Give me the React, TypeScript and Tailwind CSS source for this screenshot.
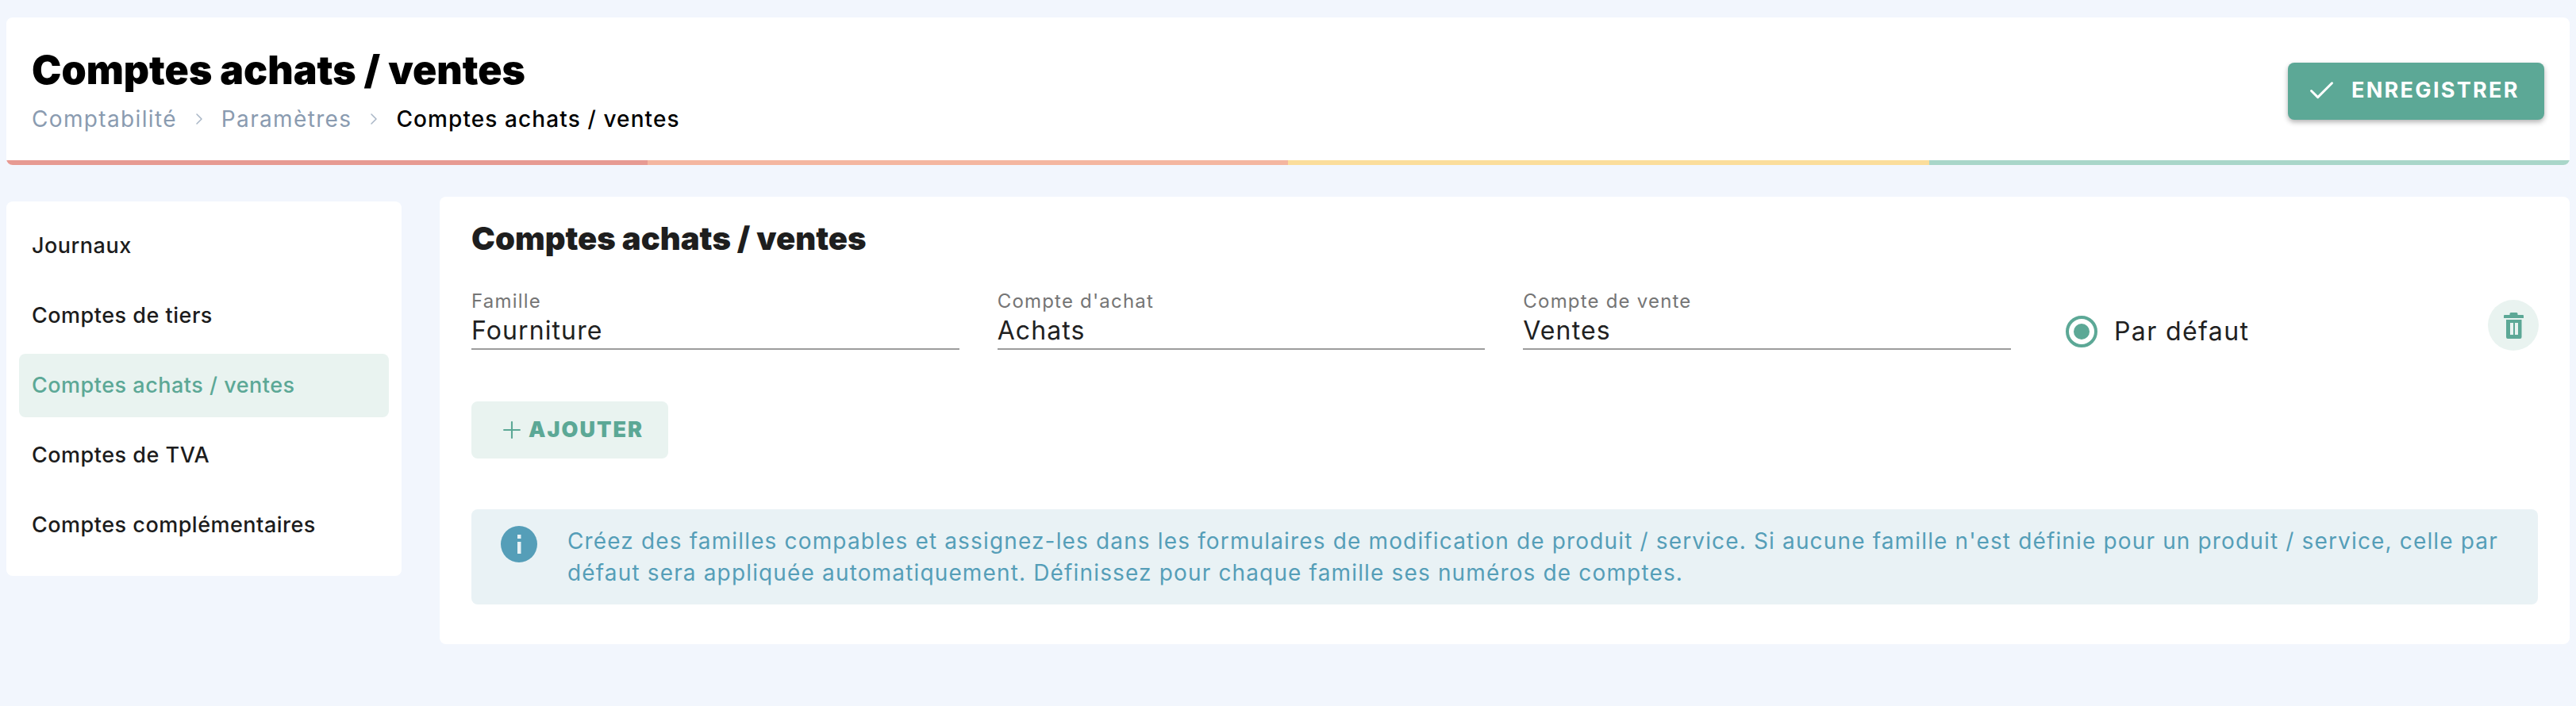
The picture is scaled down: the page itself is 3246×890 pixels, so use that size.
import { Check, ChevronRight, Plus } from 'lucide-react';

const menu = ['Journaux', 'Comptes de tiers', 'Comptes achats / ventes', 'Comptes de TVA', 'Comptes complémentaires'];

const fields = [
  { label: 'Famille', value: 'Fourniture' },
  { label: "Compte d'achat", value: 'Achats' },
  { label: 'Compte de vente', value: 'Ventes' },
];

function TrashIcon() {
  return (
    <svg viewBox="0 0 25 33" className="w-[25px] h-[33px]" fill="#5ca896">
      <path d="M9 0h7a1.5 1.5 0 0 1 1.5 1.5V3H24a1 1 0 0 1 1 1v3H0V4a1 1 0 0 1 1-1h6.500V1.500A1.500 1.500 0 0 1 9 0z" />
      <path fillRule="evenodd" d="M3 9h19.500v22a2 2 0 0 1-2 2H5a2 2 0 0 1-2-2V9zm5 4v15h4V13H8zm6 0v15h4V13h-4z" />
    </svg>
  );
}

function InfoIcon() {
  return (
    <svg viewBox="0 0 46 46" className="w-[46px] h-[46px] shrink-0 mt-[1px]">
      <circle cx="23" cy="23" r="23" fill="#559eb8" />
      <rect x="21" y="11" width="4.5" height="5" fill="#e9f2f5" />
      <rect x="21" y="20" width="4.5" height="15" fill="#e9f2f5" />
    </svg>
  );
}

export default function App() {
  return (
    <div className="h-[890px] bg-[#f2f6fd] px-2 pt-[22px] font-['Inter',sans-serif]">
      <header className="h-[186px] bg-white rounded-lg overflow-hidden flex flex-col">
        <div className="flex-1 flex items-center justify-between pl-[32px] pr-[32px]">
          <div>
            <h1 className="text-[50px] leading-[64px] font-black text-black mt-[2px]">Comptes achats / ventes</h1>
            <nav className="flex items-center text-[28px] leading-[42px] mt-[9px] tracking-[1.1px]">
              <span className="text-[#8a9bb0] tracking-[1.35px]">Comptabilité</span>
              <ChevronRight className="w-[24px] h-[24px] mx-[16px] text-[#a9b6c6]" strokeWidth={1.5} />
              <span className="text-[#8a9bb0] tracking-[1.35px]">Paramètres</span>
              <ChevronRight className="w-[24px] h-[24px] mx-[16px] text-[#a9b6c6]" strokeWidth={1.5} />
              <span className="text-black font-medium">Comptes achats / ventes</span>
            </nav>
          </div>
          <button className="w-[323px] h-[72px] mt-[5px] rounded-lg bg-[#5ca896] text-white flex items-center pl-[23px] shadow-[0_3px_6px_rgba(0,0,0,0.3)]">
            <Check className="w-[39px] h-[39px]" strokeWidth={1.8} />
            <span className="ml-[18px] text-[27px] font-bold tracking-[2.3px]">ENREGISTRER</span>
          </button>
        </div>
        <div className="h-[6px] grid grid-cols-4">
          <div className="bg-[#e79a92]" />
          <div className="bg-[#f4b6a0]" />
          <div className="bg-[#fbdd9b]" />
          <div className="bg-[#a9d6c9]" />
        </div>
      </header>

      <div className="flex items-start gap-[48px] mt-[40px]">
        <aside className="w-[498px] mt-[6px] bg-white rounded-lg p-[16px] flex flex-col gap-[8px] pb-[24px]">
          {menu.map((item, i) => (
            <div
              key={item}
              className={
                i === 2
                  ? 'h-[80px] flex items-center pl-[16px] rounded-lg bg-[#e9f3f0] text-[#5ca896] text-[27px] font-medium tracking-[0.5px]'
                  : 'h-[80px] flex items-center pl-[16px] text-[#1c1c1c] text-[27px] font-medium tracking-[0.5px]'
              }
            >
              {item}
            </div>
          ))}
        </aside>

        <main className="flex-1 h-[564px] bg-white rounded-lg pl-[40px] pr-[40px] pt-[27px]">
          <h2 className="text-[40px] leading-[52px] font-black text-[#1e1e1e]">Comptes achats / ventes</h2>
          <div className="flex items-start mt-[38px] h-[110px]">
            <div className="flex gap-[48px]">
              {fields.map((f) => (
                <div key={f.label} className="w-[614.67px] border-b-2 border-[#9c9c9c]">
                  <div className="text-[24px] leading-[30px] text-[#757575] tracking-[1.2px]">{f.label}</div>
                  <div className="text-[32px] leading-[44px] text-[#212121] tracking-[1.1px]">{f.value}</div>
                </div>
              ))}
            </div>
            <label className="flex items-center ml-[69px] mt-[33px]">
              <span className="w-[40px] h-[40px] rounded-full border-4 border-[#5ca896] flex items-center justify-center">
                <span className="w-[20px] h-[20px] rounded-full bg-[#5ca896]" />
              </span>
              <span className="ml-[21px] text-[32px] leading-[40px] text-[#212121] tracking-[1.4px]">Par défaut</span>
            </label>
            <button className="w-[64px] h-[64px] ml-auto mr-[-1px] mt-[13px] rounded-full bg-[#e9f3f0] flex items-center justify-center">
              <TrashIcon />
            </button>
          </div>
          <button className="mt-[31px] w-[248px] h-[72px] rounded-lg bg-[#e9f3f0] text-[#5ca896] flex items-center pl-[34px]">
            <Plus className="w-[34px] h-[34px]" strokeWidth={1.5} />
            <span className="ml-[4px] text-[27px] font-black tracking-[2px]">AJOUTER</span>
          </button>
          <div className="mt-[64px] h-[120px] rounded-lg bg-[#e9f2f5] flex items-start pl-[37px] pt-[20px] gap-[38px]">
            <InfoIcon />
            <p className="text-[28px] leading-[40px] text-[#559eb8] tracking-[1.15px]">
              Créez des familles compables et assignez-les dans les formulaires de modification de produit / service. Si aucune famille n'est définie pour un produit / service, celle par
              <br />
              défaut sera appliquée automatiquement. Définissez pour chaque famille ses numéros de comptes.
            </p>
          </div>
        </main>
      </div>
    </div>
  );
}
